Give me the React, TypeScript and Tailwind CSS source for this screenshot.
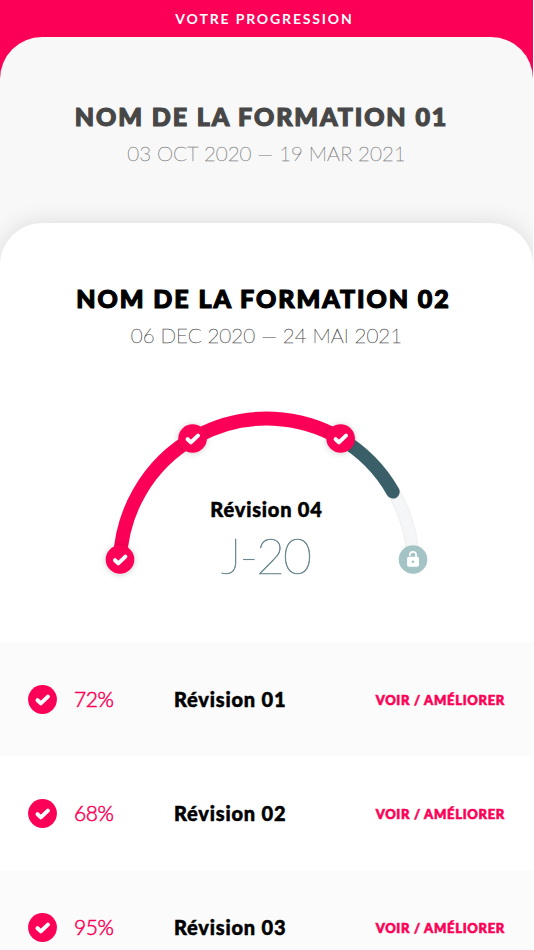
import React from 'react';

interface Revision {
  id: string;
  name: string;
  score: number;
}

const REVISIONS: Revision[] = [
  { id: 'r1', name: 'Révision 01', score: 72 },
  { id: 'r2', name: 'Révision 02', score: 68 },
  { id: 'r3', name: 'Révision 03', score: 95 },
];

const CHECK_PATH = 'M-5 0.7 L-1.7 3.9 L5.4 -2.9';

const CheckBadge: React.FC = () => (
  <svg className="size-[29px] shrink-0" viewBox="-14.5 -14.5 29 29" fill="none">
    <circle r="14.4" fill="#fb0056" />
    <path d={CHECK_PATH} stroke="#fff" strokeWidth="4" strokeLinecap="round" strokeLinejoin="round" />
  </svg>
);

const GaugeCheck: React.FC<{ x: number; y: number }> = ({ x, y }) => (
  <g transform={`translate(${x} ${y})`}>
    <circle r="14.3" fill="#fb0056" filter="url(#badge-shadow)" />
    <path d={CHECK_PATH} stroke="#fff" strokeWidth="4" strokeLinecap="round" strokeLinejoin="round" />
  </g>
);

const ProgressGauge: React.FC = () => (
  <div className="grid justify-items-center">
    <svg className="col-start-1 row-start-1 h-[190px] w-[333px]" viewBox="100 400 333 190" fill="none">
      <defs>
        <filter id="badge-shadow" x="-50%" y="-50%" width="200%" height="200%">
          <feDropShadow dx="0" dy="0.5" stdDeviation="3" floodColor="#000" floodOpacity="0.2" />
        </filter>
      </defs>
      <path d="M340.5 438.5 A146.8 146.8 0 0 1 413 559.5" stroke="#f1f2f3" strokeWidth="13.5" />
      <path d="M340.5 438.5 A146.8 146.8 0 0 1 413 559.5" stroke="#f5f6f7" strokeWidth="10" />
      <path d="M340.5 438.5 A146.8 146.8 0 0 1 393 491.8" stroke="#3b5f69" strokeWidth="13.5" strokeLinecap="round" />
      <path d="M120 559.5 A146.8 146.8 0 0 1 340.5 438.5" stroke="#fb0056" strokeWidth="14" />
      <GaugeCheck x={120} y={559.5} />
      <GaugeCheck x={192.6} y={438.5} />
      <GaugeCheck x={340.6} y={438.5} />
      <g transform="translate(413 559.5)">
        <circle r="14.3" fill="#a3c3c5" />
        <rect x="-5.9" y="-2.7" width="11.9" height="9.9" rx="1.8" fill="#fff" />
        <path d="M-3.1 -4.4 V-4.6 A3.1 3.1 0 0 1 3.1 -4.6 V-2" stroke="#fff" strokeWidth="1.7" strokeLinecap="round" />
        <circle cy="2.2" r="1.3" fill="#a3c3c5" />
      </g>
    </svg>
    <div className="col-start-1 row-start-1 flex flex-col items-center pt-[97px]">
      <span className="text-[20px] leading-6 font-black tracking-[0.8px] text-black [-webkit-text-stroke:0.5px]">Révision 04</span>
      <span className="mt-1 pr-0.5 text-[50px] leading-[60px] font-thin tracking-[-2px] text-[#6b8790] [-webkit-text-stroke:0.6px]">J-20</span>
    </div>
  </div>
);

const RevisionRow: React.FC<{ revision: Revision }> = ({ revision }) => (
  <li className="flex h-[114px] shrink-0 items-center pr-7 pl-7 odd:bg-[#fbfbfb]">
    <CheckBadge />
    <span className="ml-[17px] w-[100px] text-[21px] font-light tracking-[-0.4px] text-[#fb0056] [-webkit-text-stroke:0.5px]">{revision.score}%</span>
    <span className="text-[20px] font-black tracking-[0.8px] text-black [-webkit-text-stroke:0.5px]">{revision.name}</span>
    <a href="#" className="ml-auto pt-[3px] text-[13px] font-black tracking-[0.7px] text-[#fb0056] [-webkit-text-stroke:0.6px]">VOIR / AMÉLIORER</a>
  </li>
);

const FormationDates: React.FC<{ start: string; end: string }> = ({ start, end }) => (
  <p className="mt-[7px] text-[20.5px] leading-[30px] font-thin [-webkit-text-stroke:0.3px]">
    {start} <span className="inline-block">—</span> {end}
  </p>
);

const App: React.FC = () => (
  <div className="h-[950px] w-[534px] overflow-hidden bg-white font-['Lato',sans-serif]">
    <div className="flex h-[950px] w-[533px] flex-col overflow-hidden bg-[#fb0056]">
      <header className="flex h-[37px] shrink-0 items-center justify-center pr-1 text-[14px] font-bold tracking-[1.85px] text-white">
        VOTRE PROGRESSION
      </header>
      <div className="flex grow flex-col rounded-t-[42px] bg-[#f8f8f8]">
        <section className="flex h-[186px] shrink-0 flex-col items-center pt-16">
          <h2 className="pr-2.5 text-[25px] leading-[30px] font-black tracking-[1.9px] text-[#474747] [-webkit-text-stroke:1.2px]">NOM DE LA FORMATION 01</h2>
          <div className="text-[#777]">
            <FormationDates start="03 OCT 2020" end="19 MAR 2021" />
          </div>
        </section>
        <section className="flex grow flex-col rounded-t-[42px] bg-white shadow-[0_0_24px_rgba(0,0,0,0.12)]">
          <div className="flex h-[177px] shrink-0 flex-col items-center pt-[60px]">
            <h2 className="pr-1.5 text-[25px] leading-[30px] font-black tracking-[1.95px] text-black [-webkit-text-stroke:1.2px]">NOM DE LA FORMATION 02</h2>
            <div className="text-[#444]">
              <FormationDates start="06 DEC 2020" end="24 MAI 2021" />
            </div>
          </div>
          <ProgressGauge />
          <ul className="mt-[52px] flex flex-col">
            {REVISIONS.map((revision) => (
              <RevisionRow key={revision.id} revision={revision} />
            ))}
          </ul>
        </section>
      </div>
    </div>
  </div>
);

export default App;
